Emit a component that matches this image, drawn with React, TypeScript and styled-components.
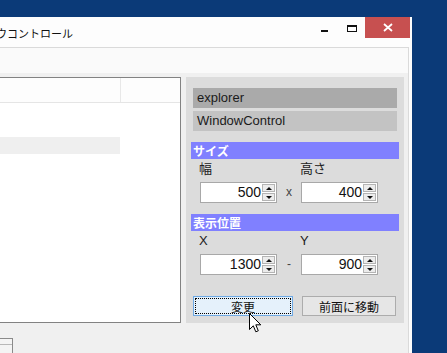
import React from 'react';
import styled, { createGlobalStyle } from 'styled-components';

const GlobalStyle = createGlobalStyle`
  html, body {
    margin: 0;
    padding: 0;
    background: #0b3a78;
    overflow: hidden;
  }
  body {
    font-family: "Liberation Sans", "Noto Sans CJK JP", sans-serif;
    color: #000;
  }
`;

const Desktop = styled.div`
  position: relative;
  width: 447px;
  height: 353px;
  padding-top: 17px;
  box-sizing: border-box;
  background: #0b3a78;
  overflow: hidden;
`;

const Window = styled.div`
  width: 412px;
  height: 336px;
  background: #fdfdfd;
  display: flex;
  flex-direction: column;
  overflow: hidden;
`;

const TitleBar = styled.div`
  height: 30px;
  flex-shrink: 0;
  display: flex;
  align-items: flex-start;
`;

const Title = styled.div`
  flex: 1;
  margin-left: -48px;
  padding-top: 8px;
  font-family: "Noto Sans CJK JP", sans-serif;
  font-size: 11px;
  line-height: 16px;
  white-space: nowrap;
  color: #111;
`;

const CaptionButton = styled.div<{ $close?: boolean }>`
  width: ${p => (p.$close ? '45px' : '26px')};
  height: 21px;
  margin-right: ${p => (p.$close ? '2px' : '0')};
  background: ${p => (p.$close ? '#c75050' : 'transparent')};
  display: flex;
  justify-content: center;
  align-items: flex-start;
  box-sizing: border-box;
`;

const MinGlyph = styled.span`
  width: 7px;
  height: 2px;
  margin-top: 13px;
  margin-left: -3px;
  background: #111;
`;

const MaxGlyph = styled.span`
  width: 10px;
  height: 7px;
  margin-top: 8px;
  box-sizing: border-box;
  border: 1px solid #111;
  border-top-width: 2px;
`;

const Client = styled.div`
  flex: 1;
  margin-right: 3px;
  border-top: 1px solid #dadada;
  border-right: 1px solid #dadada;
  background: #f0f0f0;
  display: flex;
  flex-direction: column;
`;

const MenuBand = styled.div`
  height: 25px;
  flex-shrink: 0;
  background: #fafafa;
`;

const Body = styled.div`
  display: flex;
  align-items: flex-start;
  gap: 5px;
  padding-top: 4px;
`;

const LeftColumn = styled.div`
  width: 181px;
  display: flex;
  flex-direction: column;
`;

const ListView = styled.div`
  height: 246px;
  box-sizing: border-box;
  border: 1px solid #828282;
  border-left: none;
  background: #fff;
`;

const ListHeader = styled.div`
  height: 25px;
  box-sizing: border-box;
  border-bottom: 1px solid #e5e5e5;
  background: #fdfdfd;
  display: flex;
`;

const HeaderCell = styled.div`
  width: 120px;
  border-right: 1px solid #e8e8e8;
`;

const ListRow = styled.div<{ $selected?: boolean }>`
  width: 120px;
  height: 17px;
  background: ${p => (p.$selected ? '#efefef' : 'transparent')};
`;

const MiniGrid = styled.div`
  margin-top: 15px;
  width: 13px;
  height: 20px;
  box-sizing: border-box;
  border-top: 1px solid #8a8a8a;
  border-right: 1px solid #8a8a8a;
  background: #f4f4f4;
`;

const MiniGridRow = styled.div`
  height: 5px;
  border-bottom: 1px solid #b8b8b8;
`;

const Panel = styled.div`
  width: 218px;
  height: 246px;
  box-sizing: border-box;
  padding: 11px 5px 0 5px;
  background: #dcdcdc;
`;

const NameBox = styled.div<{ $shade: string }>`
  margin: 0 2px 3px;
  height: 20px;
  padding-left: 4px;
  line-height: 20px;
  font-size: 13px;
  color: #1a1a1a;
  background: ${p => p.$shade};
`;

const SectionHeader = styled.div<{ $gap: number }>`
  margin-top: ${p => p.$gap}px;
  height: 17px;
  padding-left: 2px;
  line-height: 17px;
  font-family: "Noto Sans CJK JP", sans-serif;
  font-size: 12px;
  font-weight: bold;
  color: #fff;
  background: #8080ff;
`;

const FieldRow = styled.div`
  display: flex;
  align-items: flex-end;
  padding-left: 9px;
`;

const Field = styled.div`
  display: flex;
  flex-direction: column;
`;

const FieldLabel = styled.div`
  height: 23px;
  margin-left: -1px;
  line-height: 19px;
  font-family: "Liberation Sans", "Noto Sans CJK JP", sans-serif;
  font-size: 13px;
  color: #222;
`;

const SpinBox = styled.div`
  width: 77px;
  height: 21px;
  box-sizing: border-box;
  border: 1px solid #a8a8a8;
  background: #fff;
  display: flex;
`;

const SpinValue = styled.div`
  flex: 1;
  text-align: right;
  padding-right: 1px;
  font-size: 14px;
  line-height: 19px;
  color: #111;
`;

const SpinButtons = styled.div`
  width: 13px;
  padding: 1px 1px 1px 0;
  display: flex;
  flex-direction: column;
  gap: 1px;
`;

const SpinArrow = styled.div<{ $down?: boolean }>`
  flex: 1;
  box-sizing: border-box;
  border: 1px solid #b4b4b4;
  background: #ececec;
  display: flex;
  align-items: center;
  justify-content: center;

  &::after {
    content: '';
    width: 0;
    height: 0;
    border-left: 3px solid transparent;
    border-right: 3px solid transparent;
    ${p => (p.$down ? 'border-top: 3px solid #111;' : 'border-bottom: 3px solid #111;')}
  }
`;

const Separator = styled.div`
  width: 24px;
  height: 21px;
  line-height: 21px;
  text-align: center;
  font-size: 12px;
  color: #444;
`;

const ButtonRow = styled.div`
  display: flex;
  gap: 9px;
  margin-top: 21px;
  padding-left: 2px;
`;

const PushButton = styled.div<{ $width: number; $focused?: boolean }>`
  position: relative;
  width: ${p => p.$width}px;
  height: 20px;
  box-sizing: border-box;
  border: 1px solid ${p => (p.$focused ? '#6ea9e4' : '#acacac')};
  background: ${p => (p.$focused ? '#e5f1fb' : '#e6e6e6')};
  display: flex;
  align-items: center;
  justify-content: center;
  font-family: "Noto Sans CJK JP", sans-serif;
  font-size: 12px;
  color: #111;
  outline: ${p => (p.$focused ? '1px dotted #000' : 'none')};
  outline-offset: -3px;
`;

const Cursor = styled.svg`
  position: absolute;
  left: 249px;
  top: 313px;
`;

function Spinner({ value }: { value: string }) {
  return (
    <SpinBox>
      <SpinValue>{value}</SpinValue>
      <SpinButtons>
        <SpinArrow />
        <SpinArrow $down />
      </SpinButtons>
    </SpinBox>
  );
}

export default function App() {
  return (
    <>
      <GlobalStyle />
      <Desktop>
        <Window>
          <TitleBar>
            <Title>ウィンドウコントロール</Title>
            <CaptionButton>
              <MinGlyph />
            </CaptionButton>
            <CaptionButton>
              <MaxGlyph />
            </CaptionButton>
            <CaptionButton $close>
              <svg width="45" height="21" viewBox="0 0 45 21">
                <path d="M19 7 L27 14 M27 7 L19 14" stroke="#fff" strokeWidth="1.8" />
              </svg>
            </CaptionButton>
          </TitleBar>
          <Client>
            <MenuBand />
            <Body>
              <LeftColumn>
                <ListView>
                  <ListHeader>
                    <HeaderCell />
                  </ListHeader>
                  <ListRow />
                  <ListRow />
                  <ListRow $selected />
                </ListView>
                <MiniGrid>
                  <MiniGridRow />
                </MiniGrid>
              </LeftColumn>
              <Panel>
                <NameBox $shade="#aaaaaa">explorer</NameBox>
                <NameBox $shade="#c3c3c3">WindowControl</NameBox>
                <SectionHeader $gap={11}>サイズ</SectionHeader>
                <FieldRow>
                  <Field>
                    <FieldLabel>幅</FieldLabel>
                    <Spinner value="500" />
                  </Field>
                  <Separator>x</Separator>
                  <Field>
                    <FieldLabel>高さ</FieldLabel>
                    <Spinner value="400" />
                  </Field>
                </FieldRow>
                <SectionHeader $gap={11}>表示位置</SectionHeader>
                <FieldRow>
                  <Field>
                    <FieldLabel>X</FieldLabel>
                    <Spinner value="1300" />
                  </Field>
                  <Separator>-</Separator>
                  <Field>
                    <FieldLabel>Y</FieldLabel>
                    <Spinner value="900" />
                  </Field>
                </FieldRow>
                <ButtonRow>
                  <PushButton $width={100} $focused>変更</PushButton>
                  <PushButton $width={94}>前面に移動</PushButton>
                </ButtonRow>
              </Panel>
            </Body>
          </Client>
        </Window>
        <Cursor width="13" height="21" viewBox="0 0 13 21">
          <path
            d="M0.5 0.5 L0.5 16.5 L4.3 12.8 L6.8 18.8 L9.3 17.8 L6.8 11.8 L11.8 11.8 Z"
            fill="#fff"
            stroke="#000"
            strokeWidth="1"
            strokeLinejoin="round"
          />
        </Cursor>
      </Desktop>
    </>
  );
}
